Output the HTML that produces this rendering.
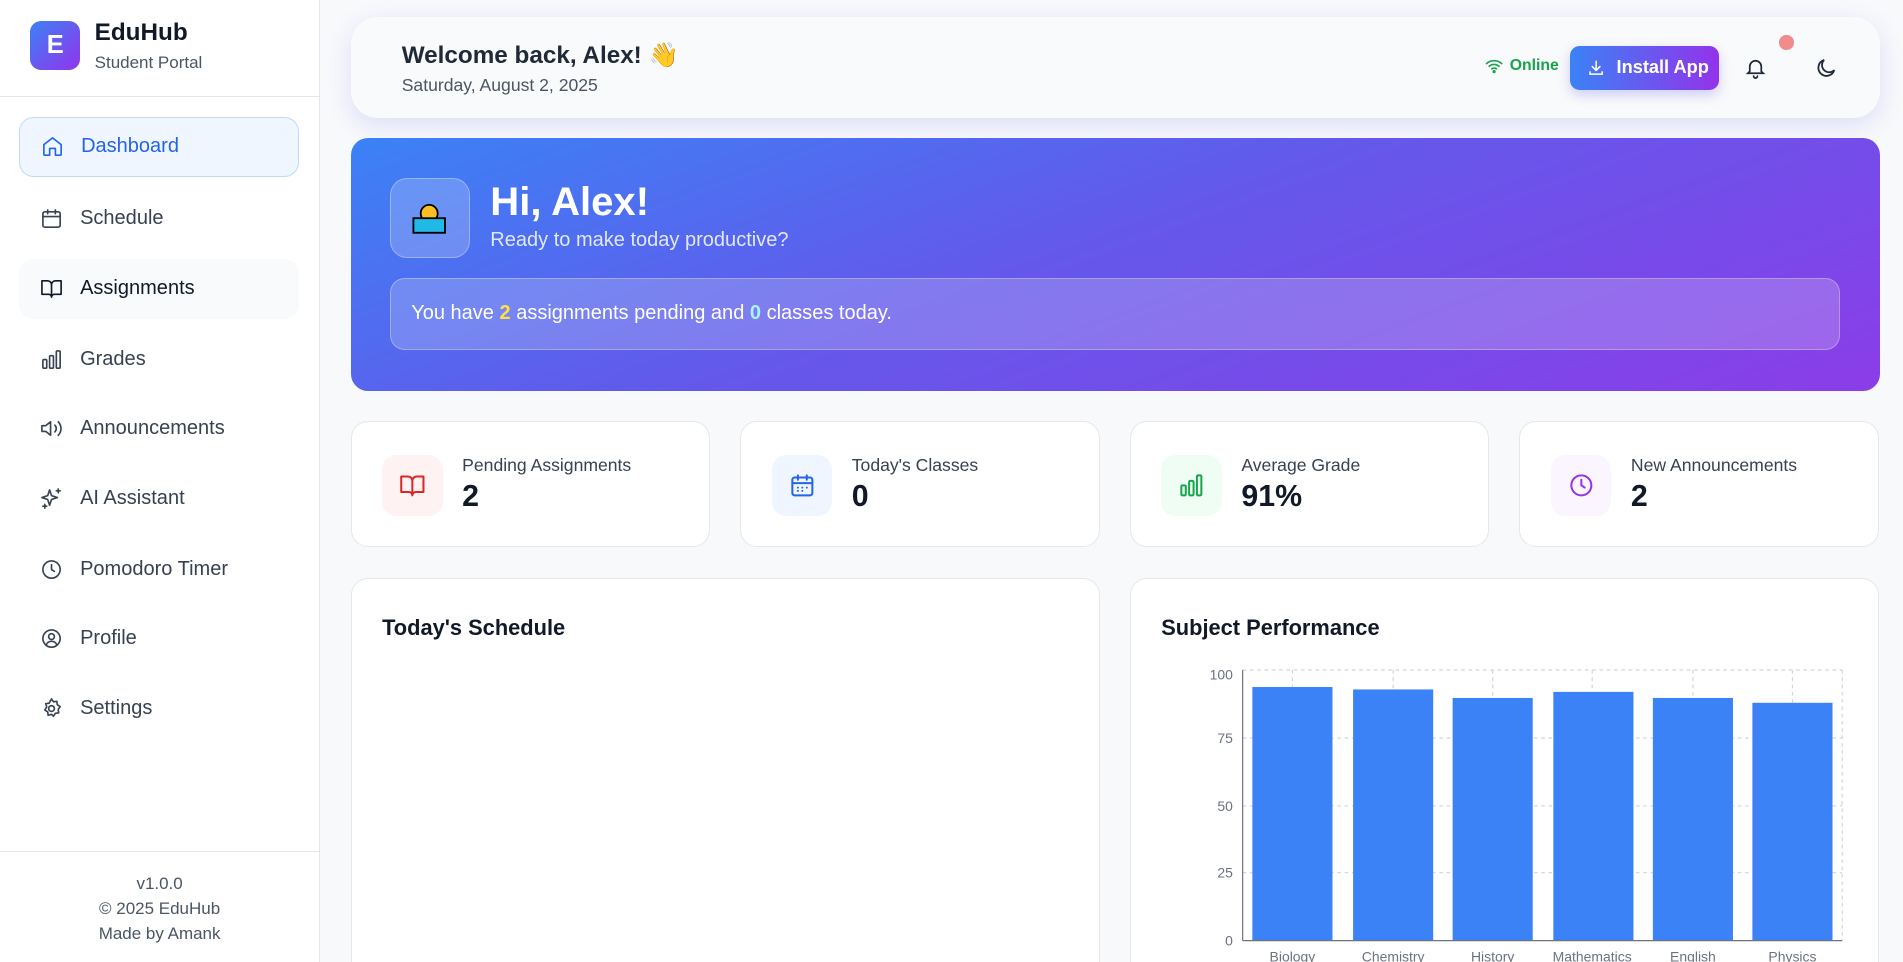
<!DOCTYPE html>
<html><head><meta charset="utf-8"><style>
html{zoom:1.21365;overflow:hidden}
*{box-sizing:border-box;margin:0;padding:0}
body{width:1568px;height:793px;overflow:hidden;background:#f8f9fb;font-family:"Liberation Sans",sans-serif;color:#111827;position:relative}
.side{position:absolute;left:0;top:0;width:264px;height:900px;background:#fff;border-right:1px solid #e5e7eb}
.logo{position:absolute;left:25px;top:17px;width:41px;height:41px;border-radius:9px;background:linear-gradient(135deg,#3b82f6,#9333ea);color:#fff;font-weight:bold;font-size:21px;display:flex;align-items:center;justify-content:center}
.brand{position:absolute;left:78px;top:16px;font-size:20px;font-weight:bold}
.sub{position:absolute;left:78px;top:44px;font-size:14px;color:#4b5563}
.hr{position:absolute;left:0;top:79px;width:263px;border-top:1px solid #e5e7eb}
.nav{position:absolute;left:16px;width:230px;height:50px;border-radius:12px;display:flex;align-items:center;padding-left:17px;font-size:16.5px;color:#374151}
.nav svg{width:19px;height:19px;margin-right:14px;fill:none;stroke:currentColor;stroke-width:1.7;stroke-linecap:round;stroke-linejoin:round}
.nav.act{background:#eff6ff;border:1px solid #bfdbfe;color:#2563eb}
.nav.hov{background:#f9fafb;color:#111827}
.foot{position:absolute;left:0;top:701px;width:263px;border-top:1px solid #e5e7eb;text-align:center;font-size:14px;color:#4b5563;line-height:20.5px;padding-top:17px}
.top{position:absolute;left:289px;top:14px;width:1260px;height:83px;background:#f9fafb;border-radius:22px;box-shadow:0 6px 20px rgba(99,102,241,.18)}
.hero{position:absolute;left:289px;top:114px;width:1260px;height:208px;border-radius:14px;background:linear-gradient(160deg,#3b82f6 0%,#6359ea 45%,#8b3de8 100%)}
.card{position:absolute;background:#fff;border:1px solid #e5e7eb;border-radius:14px}
.ic{position:absolute;left:25px;top:27px;width:50px;height:50px;border-radius:12px;display:flex;align-items:center;justify-content:center}
.ic svg{width:22px;height:22px;fill:none;stroke:currentColor;stroke-width:1.8;stroke-linecap:round;stroke-linejoin:round}
.cl{position:absolute;left:91px;top:27px;font-size:14.5px;color:#374151}
.cv{position:absolute;left:91px;top:48px;font-size:25px;font-weight:bold}
</style></head><body>
<div class="side">
<div class="logo">E</div><div class="brand">EduHub</div><div class="sub">Student Portal</div>
<div class="hr"></div>
<div class="nav act" style="top:96px"><svg viewBox="0 0 24 24"><path d="M3 10l9-7 9 7v10a1 1 0 0 1-1 1h-5v-7h-6v7H4a1 1 0 0 1-1-1z"/></svg>Dashboard</div>
<div class="nav" style="top:155px"><svg viewBox="0 0 24 24"><rect x="3" y="5" width="18" height="16" rx="2"/><path d="M8 3v4M16 3v4M3 10h18"/></svg>Schedule</div>
<div class="nav hov" style="top:213px"><svg viewBox="0 0 24 24"><path d="M2 4h6a4 4 0 0 1 4 4v13a3 3 0 0 0-3-3H2zM22 4h-6a4 4 0 0 0-4 4v13a3 3 0 0 1 3-3h7z"/></svg>Assignments</div>
<div class="nav" style="top:271px"><svg viewBox="0 0 24 24"><rect x="3" y="12" width="4" height="9" rx="1"/><rect x="10" y="8" width="4" height="13" rx="1"/><rect x="17" y="3" width="4" height="18" rx="1"/></svg>Grades</div>
<div class="nav" style="top:328px"><svg viewBox="0 0 24 24"><path d="M11 5L6 9H2v6h4l5 4zM15.5 8.5a5 5 0 0 1 0 7M19 5a10 10 0 0 1 0 14"/></svg>Announcements</div>
<div class="nav" style="top:386px"><svg viewBox="0 0 24 24"><path d="M10 3l2 6 6 2-6 2-2 6-2-6-6-2 6-2zM19 2v4M17 4h4M5 18v4M3 20h4"/></svg>AI Assistant</div>
<div class="nav" style="top:444px"><svg viewBox="0 0 24 24"><circle cx="12" cy="12" r="9"/><path d="M12 7v5l3 2"/></svg>Pomodoro Timer</div>
<div class="nav" style="top:501px"><svg viewBox="0 0 24 24"><circle cx="12" cy="12" r="9"/><circle cx="12" cy="10" r="3"/><path d="M6.5 18.5a6 6 0 0 1 11 0"/></svg>Profile</div>
<div class="nav" style="top:559px"><svg viewBox="0 0 24 24"><circle cx="12" cy="12" r="3"/><path d="M12 2l2 3 3.5-.5.5 3.5 3 2-2 3 .5 3.5-3.5.5-2 3-2-2-3.5 1-.5-3.5-3-2 2-3-1-3.5 3.5-.5z"/></svg>Settings</div>
<div class="foot">v1.0.0<br>© 2025 EduHub<br>Made by Amank</div>
</div>

<div class="top">
<div style="position:absolute;left:42px;top:19px;font-size:20px;font-weight:bold;color:#1f2937">Welcome back, Alex! 👋</div>
<div style="position:absolute;left:42px;top:48px;font-size:14.5px;color:#4b5563">Saturday, August 2, 2025</div>
<div style="position:absolute;left:935px;top:33px;font-size:13px;font-weight:bold;color:#16a34a;display:flex;align-items:center"><svg width="15" height="13" viewBox="0 0 24 20" fill="none" stroke="#16a34a" stroke-width="2.2" stroke-linecap="round" style="margin-right:5px"><path d="M2 7a15 15 0 0 1 20 0M5.5 10.5a10 10 0 0 1 13 0M9 14a5 5 0 0 1 6 0"/><circle cx="12" cy="17.5" r="1" fill="#16a34a"/></svg>Online</div>
<div style="position:absolute;left:1005px;top:24px;width:122px;height:36px;border-radius:8px;background:linear-gradient(90deg,#3b82f6,#9333ea);color:#fff;font-size:15px;font-weight:bold;display:flex;align-items:center;padding-left:14px;box-shadow:0 4px 10px rgba(99,102,241,.3)"><svg width="15" height="15" viewBox="0 0 24 24" fill="none" stroke="#fff" stroke-width="2" stroke-linecap="round" style="margin-right:9px"><path d="M12 3v12M7 10l5 5 5-5M4 17v3h16v-3"/></svg>Install App</div>
<div style="position:absolute;left:1177px;top:15px;width:12px;height:12px;border-radius:50%;background:#f28b8b"></div>
<svg style="position:absolute;left:1148px;top:32px" width="19" height="19" viewBox="0 0 24 24" fill="none" stroke="#1f2937" stroke-width="1.8" stroke-linecap="round"><path d="M6 16V11a6 6 0 0 1 12 0v5l2 2H4zM10 21a2 2 0 0 0 4 0"/></svg>
<svg style="position:absolute;left:1206px;top:32px" width="20" height="20" viewBox="0 0 24 24" fill="none" stroke="#1f2937" stroke-width="1.8" stroke-linecap="round"><path d="M20 14A8 8 0 1 1 10 4a6.5 6.5 0 0 0 10 10z"/></svg>
</div>

<div class="hero">
<div style="position:absolute;left:32px;top:33px;width:66px;height:66px;border-radius:14px;background:rgba(255,255,255,.2);border:1px solid rgba(255,255,255,.3);display:flex;align-items:center;justify-content:center">
<svg width="30" height="30" viewBox="0 0 30 30"><circle cx="15" cy="11" r="7" fill="#fbbf24" stroke="#000" stroke-width="1.5"/><rect x="2" y="15" width="26" height="12" fill="#22b8e8" stroke="#000" stroke-width="1.5"/></svg></div>
<div style="position:absolute;left:115px;top:34px;font-size:33px;font-weight:bold;color:#fff">Hi, Alex!</div>
<div style="position:absolute;left:115px;top:75px;font-size:16.5px;color:#e0e7ff">Ready to make today productive?</div>
<div style="position:absolute;left:32px;top:115px;width:1195px;height:59px;border-radius:12px;background:rgba(255,255,255,.2);border:1px solid rgba(255,255,255,.3);color:#fff;font-size:16.5px;padding:19px 0 0 17px">You have <b style="color:#fde047">2</b> assignments pending and <b style="color:#a5f3fc">0</b> classes today.</div>
</div>

<div class="card" style="left:289px;top:347px;width:296px;height:104px"><div class="ic" style="background:#fef2f2;color:#dc2626"><svg viewBox="0 0 24 24"><path d="M2 4h6a4 4 0 0 1 4 4v13a3 3 0 0 0-3-3H2zM22 4h-6a4 4 0 0 0-4 4v13a3 3 0 0 1 3-3h7z"/></svg></div><div class="cl">Pending Assignments</div><div class="cv">2</div></div>
<div class="card" style="left:610px;top:347px;width:296px;height:104px"><div class="ic" style="background:#eff6ff;color:#2563eb"><svg viewBox="0 0 24 24"><rect x="3" y="5" width="18" height="16" rx="2"/><path d="M8 3v4M16 3v4M3 10h18M8 14h.01M12 14h.01M16 14h.01M8 17h.01M12 17h.01"/></svg></div><div class="cl">Today's Classes</div><div class="cv">0</div></div>
<div class="card" style="left:931px;top:347px;width:296px;height:104px"><div class="ic" style="background:#f0fdf4;color:#16a34a"><svg viewBox="0 0 24 24"><rect x="3" y="12" width="4" height="9" rx="1"/><rect x="10" y="8" width="4" height="13" rx="1"/><rect x="17" y="3" width="4" height="18" rx="1"/></svg></div><div class="cl">Average Grade</div><div class="cv">91%</div></div>
<div class="card" style="left:1252px;top:347px;width:296px;height:104px"><div class="ic" style="background:#faf5ff;color:#9333ea"><svg viewBox="0 0 24 24"><circle cx="12" cy="12" r="9"/><path d="M12 7v5l3 2"/></svg></div><div class="cl">New Announcements</div><div class="cv">2</div></div>

<div class="card" style="left:289px;top:476px;width:617px;height:340px"><div style="position:absolute;left:25px;top:30px;font-size:18px;font-weight:bold">Today's Schedule</div></div>
<div class="card" style="left:931px;top:476px;width:617px;height:340px"><div style="position:absolute;left:25px;top:30px;font-size:18px;font-weight:bold">Subject Performance</div>
<svg style="position:absolute;left:0;top:0" width="617" height="330" font-family="Liberation Sans" font-size="11.5" fill="#6b7280">
<g stroke="#d1d5db" stroke-dasharray="3 3"><line x1="92" y1="75" x2="586" y2="75"/><line x1="92" y1="131" x2="586" y2="131"/><line x1="92" y1="187" x2="586" y2="187"/><line x1="92" y1="242" x2="586" y2="242"/><line x1="133" y1="75" x2="133" y2="298"/><line x1="216" y1="75" x2="216" y2="298"/><line x1="298" y1="75" x2="298" y2="298"/><line x1="380" y1="75" x2="380" y2="298"/><line x1="463" y1="75" x2="463" y2="298"/><line x1="545" y1="75" x2="545" y2="298"/><line x1="586" y1="75" x2="586" y2="298"/></g>
<g fill="#3b82f6"><rect x="100" y="89" width="66" height="209"/><rect x="183" y="91" width="66" height="207"/><rect x="265" y="98" width="66" height="200"/><rect x="348" y="93" width="66" height="205"/><rect x="430" y="98" width="66" height="200"/><rect x="512" y="102" width="66" height="196"/></g>
<line x1="92" y1="75" x2="92" y2="298" stroke="#6b7280"/><line x1="92" y1="298" x2="586" y2="298" stroke="#6b7280"/>
<g text-anchor="end"><text x="84" y="83">100</text><text x="84" y="135">75</text><text x="84" y="191">50</text><text x="84" y="246">25</text><text x="84" y="302">0</text></g>
<g text-anchor="middle"><text x="133" y="315">Biology</text><text x="216" y="315">Chemistry</text><text x="298" y="315">History</text><text x="380" y="315">Mathematics</text><text x="463" y="315">English</text><text x="545" y="315">Physics</text></g>
</svg></div>
</body></html>
